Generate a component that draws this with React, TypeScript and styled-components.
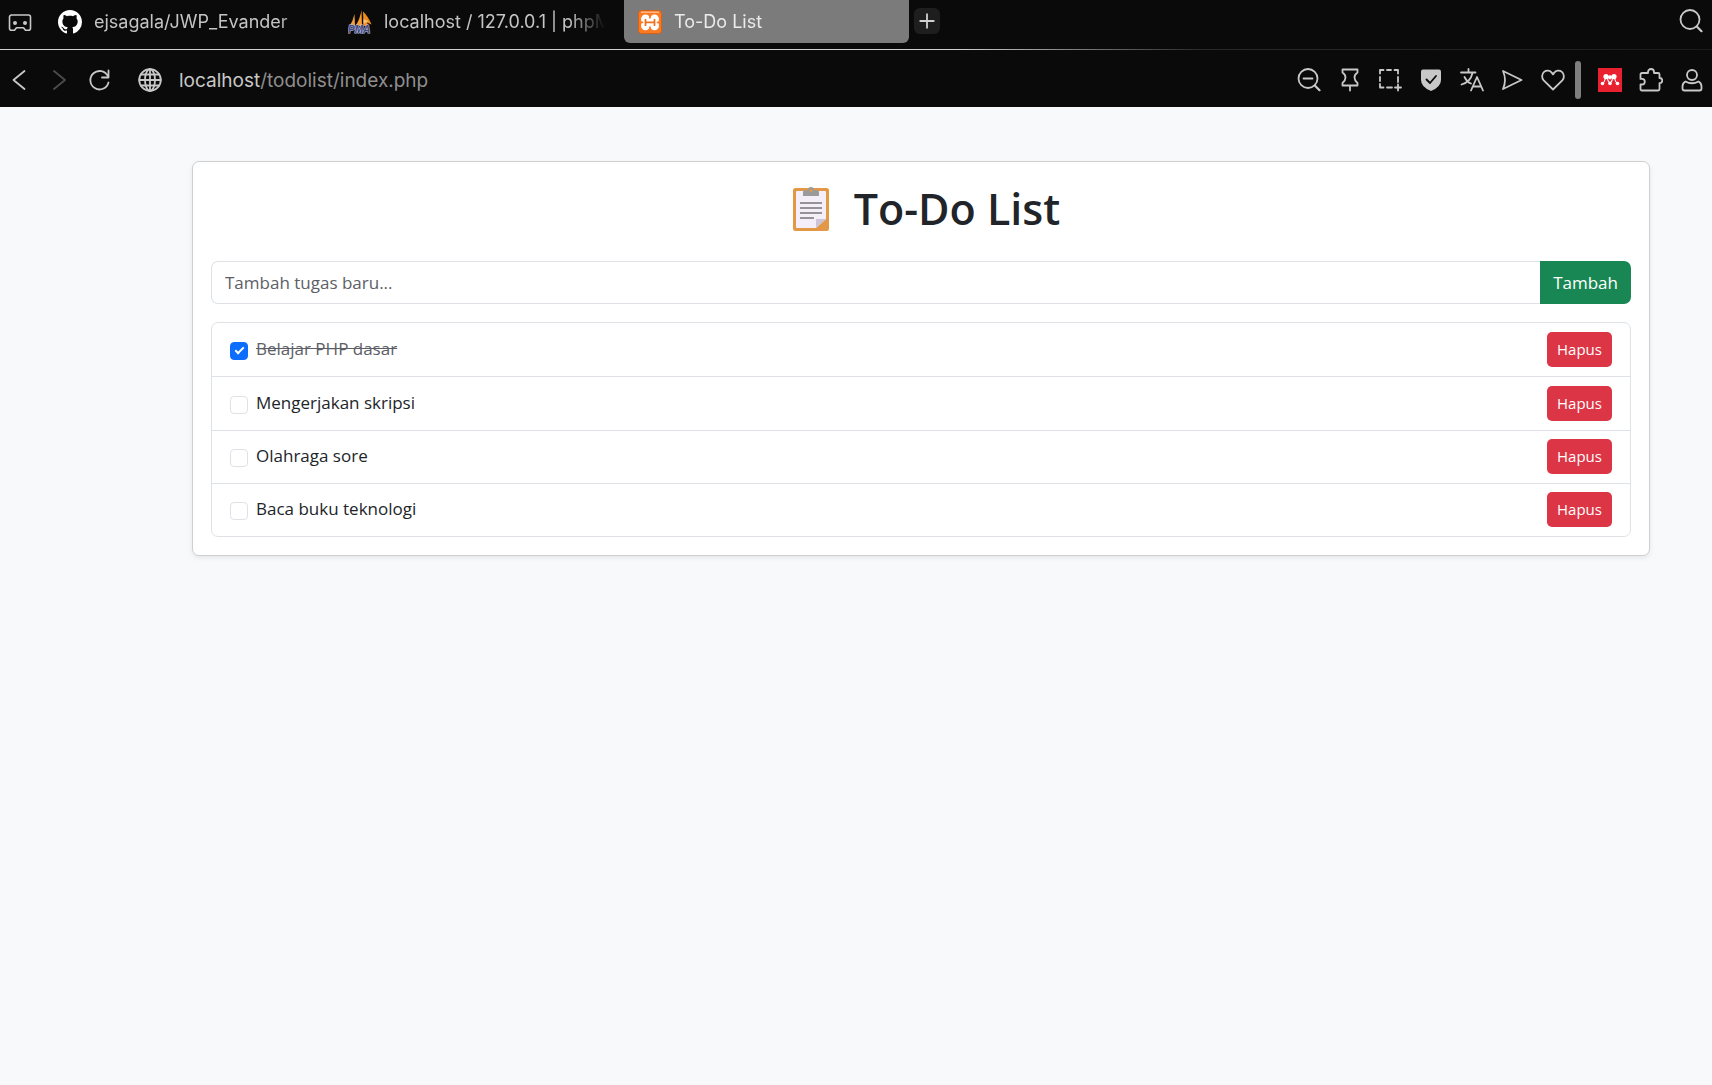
import React, { useState } from "react";
import styled, { createGlobalStyle } from "styled-components";

const GlobalStyle = createGlobalStyle`
  *, *::before, *::after { box-sizing: border-box; }
  html, body { margin: 0; min-height: 100vh; background: #f8f9fa; }
  body { font-family: "Open Sans", "Noto Sans", sans-serif; font-size: 17px; line-height: 27px; color: #212529; }
  button, input { font: inherit; margin: 0; }
`;

const Browser = styled.header`
  background: #0a0a0a;
  color: #c8c8c8;
  font-family: Inter, sans-serif;
`;

const TabStrip = styled.nav`
  display: flex;
  align-items: flex-start;
  height: 49px;
  padding: 0 9px 0 8px;
`;

const IconButton = styled.button<{ $dim?: boolean }>`
  display: flex;
  flex: none;
  padding: 0;
  border: 0;
  background: none;
  color: ${(p) => (p.$dim ? "#4c4c4c" : "#c8c8c8")};
  cursor: pointer;
`;

const StripButton = styled(IconButton)`
  padding-top: 9px;
`;

const Tabs = styled.div`
  display: flex;
  gap: 5px;
  margin-left: 12px;
`;

const Tab = styled.a<{ $active?: boolean }>`
  display: flex;
  align-items: center;
  gap: 12px;
  width: 285px;
  height: 43px;
  padding: 0 14px;
  border-radius: 0 0 6px 6px;
  background: ${(p) => (p.$active ? "#7b7b7b" : "transparent")};
  color: ${(p) => (p.$active ? "#ebebeb" : "#c4c4c4")};
  font-size: 18px;
  line-height: 43px;
  text-decoration: none;
`;

const TabTitle = styled.span`
  flex: 1;
  min-width: 0;
  overflow: hidden;
  white-space: nowrap;
  mask-image: linear-gradient(to right, #000 calc(100% - 36px), transparent);
`;

const NewTab = styled.button`
  display: flex;
  align-items: center;
  justify-content: center;
  width: 26px;
  height: 26px;
  margin: 8px auto 0 5px;
  padding: 0;
  border: 0;
  border-radius: 6px;
  background: #1e1e1e;
  color: #d0d0d0;
`;

const Divider = styled.div`
  height: 1px;
  background: linear-gradient(to right, #cfcfcf 0, #cfcfcf 56%, #2a2a2a 70%, #1c1c1c 100%);
`;

const AddressBar = styled.div`
  display: flex;
  align-items: center;
  height: 57px;
  padding: 3px 8px 0;
`;

const NavButtons = styled.div`
  display: flex;
  gap: 16px;
`;

const Address = styled.div`
  display: flex;
  flex: 1;
  align-items: center;
  gap: 17px;
  margin-left: 26px;
  font-size: 19px;
  line-height: 24px;
`;

const Url = styled.span`
  padding-top: 2px;
  color: #8f8f8f;
`;

const Host = styled.span`
  color: #c8c8c8;
`;

const PageActions = styled.div`
  display: flex;
  justify-content: space-between;
  width: 268px;
`;

const Grip = styled.span`
  width: 6px;
  height: 38px;
  margin: 0 17px 0 10px;
  border-radius: 3px;
  background: #7e7e7e;
`;

const Extensions = styled.div`
  display: flex;
  gap: 17px;
`;

const Main = styled.main`
  padding: 54px 62px 54px 192px;
`;

const Card = styled.section`
  padding: 18px;
  border: 1px solid #cfd0d2;
  border-radius: 7px;
  background: #fff;
  box-shadow: 0 2px 5px rgba(0, 0, 0, 0.08);
`;

const Title = styled.h1`
  display: flex;
  align-items: center;
  justify-content: center;
  gap: 12px;
  margin: 0 0 25px;
  padding-top: 2px;
  font-size: 43px;
  font-weight: 600;
  line-height: 54px;
`;

const TaskForm = styled.form`
  display: flex;
  margin-bottom: 18px;
`;

const TaskInput = styled.input`
  flex: 1;
  min-width: 0;
  height: 43px;
  padding: 0 13px;
  border: 1px solid #dee2e6;
  border-right: 0;
  border-radius: 7px 0 0 7px;
  background: #fff;
  color: #212529;
  &::placeholder { color: #5c6066; opacity: 1; }
`;

const AddButton = styled.button`
  padding: 0 13px;
  border: 0;
  border-radius: 0 7px 7px 0;
  background: #198754;
  color: #fff;
`;

const TaskList = styled.ul`
  display: grid;
  grid-auto-rows: 1fr;
  min-height: 215px;
  margin: 0;
  padding: 0;
  border: 1px solid #dee2e6;
  border-radius: 7px;
  list-style: none;
`;

const TaskRow = styled.li`
  display: flex;
  align-items: center;
  justify-content: space-between;
  padding: 0 18px;
  & + & { border-top: 1px solid #dee2e6; }
`;

const TaskLabel = styled.label<{ $done: boolean }>`
  display: flex;
  align-items: center;
  gap: 8px;
  color: ${(p) => (p.$done ? "#5c6066" : "#212529")};
  span {
    padding-bottom: 2px;
    text-decoration: ${(p) => (p.$done ? "line-through" : "none")};
  }
`;

const CheckBox = styled.input`
  appearance: none;
  display: grid;
  place-items: center;
  width: 18px;
  height: 18px;
  margin-top: 3px;
  border: 1px solid #dee2e6;
  border-radius: 4px;
  background: #fff;
  &:checked { border-color: #0d6efd; background: #0d6efd; }
  &:checked::after {
    content: "";
    width: 9px;
    height: 5px;
    margin-bottom: 3px;
    border: solid #fff;
    border-width: 0 0 2px 2px;
    transform: rotate(-45deg);
  }
`;

const DeleteButton = styled.button`
  width: 65px;
  height: 35px;
  padding: 0;
  border: 0;
  border-radius: 5px;
  background: #dc3545;
  color: #fff;
  font-size: 15px;
`;

type IconProps = { children: React.ReactNode; width?: number; size?: number };

const Icon = ({ children, width = 1.8, size = 24 }: IconProps) => (
  <svg width={size} height={size} viewBox="0 0 24 24" fill="none" stroke="currentColor"
    strokeWidth={width} strokeLinejoin="round" strokeLinecap="round" aria-hidden="true">
    {children}
  </svg>
);

const ControllerIcon = () => (
  <Icon width={1.6}>
    <path d="M3.500 6h17a2 2 0 0 1 2 2v11.300a2 2 0 0 1-2 2h-3l-2-2.600H8.500l-2 2.600h-3a2 2 0 0 1-2-2V8a2 2 0 0 1 2-2z" />
    <circle cx="7" cy="14" r="2" fill="currentColor" stroke="none" />
    <circle cx="17" cy="14" r="2" fill="currentColor" stroke="none" />
  </Icon>
);

const GithubIcon = () => (
  <svg width="24" height="24" viewBox="0 0 16 16" fill="#fff" aria-hidden="true">
    <path d="M8 0C3.58 0 0 3.58 0 8c0 3.54 2.29 6.53 5.47 7.59.4.07.55-.17.55-.38 0-.19-.01-.82-.01-1.49-2.01.37-2.53-.49-2.69-.94-.09-.23-.48-.94-.82-1.13-.28-.15-.68-.52-.01-.53.63-.01 1.08.58 1.23.82.72 1.21 1.87.87 2.33.66.07-.52.28-.87.51-1.07-1.78-.2-3.64-.89-3.64-3.95 0-.87.31-1.59.82-2.15-.08-.2-.36-1.02.08-2.12 0 0 .67-.21 2.2.82.64-.18 1.32-.27 2-.27s1.36.09 2 .27c1.53-1.04 2.2-.82 2.2-.82.44 1.1.16 1.92.08 2.12.51.56.82 1.27.82 2.15 0 3.07-1.87 3.75-3.65 3.95.29.25.54.73.54 1.48 0 1.07-.01 1.93-.01 2.2 0 .21.15.46.55.38A8.01 8.01 0 0 0 16 8c0-4.42-3.58-8-8-8z" />
  </svg>
);

const PhpMyAdminIcon = () => (
  <svg width="24" height="24" viewBox="0 0 24 24" aria-hidden="true">
    <path d="M6.500 4 7 16H1.500Q5 11 6.500 4z" fill="#f5a13a" />
    <path d="M13.500 0 14 16H7.500Q12 9 13.500 0z" fill="#f89c2e" />
    <path d="M15 1.500Q20 6 23.500 14.500L19 12.500 20.500 16H15.500z" fill="#ef8b1c" />
    <path d="M15.500 9l5 2-5 3z" fill="#fbc072" />
    <text x="0" y="23" fontFamily="Liberation Sans, sans-serif" fontSize="10"
      fontWeight="700" fontStyle="italic" fill="#43477f" stroke="#b9bbdc" strokeWidth="1.2" paintOrder="stroke">PMA</text>
  </svg>
);

const XamppIcon = () => (
  <svg width="24" height="24" viewBox="0 0 24 24" aria-hidden="true">
    <rect x="0.500" y="0.500" width="23" height="23" rx="3" fill="#fb7a24" stroke="#d8601a" />
    <path d="M3 2.200h18" stroke="#ffc79c" strokeWidth="1.200" />
    <path d="M7 8.600v7.200M17 8.600v7.200M7 12.200h10" stroke="#fff" strokeWidth="7" fill="none" />
    <g fill="#fff">
      <circle cx="7.500" cy="8.900" r="4.400" />
      <circle cx="16.500" cy="8.900" r="4.400" />
      <circle cx="7.500" cy="15.900" r="4.400" />
      <circle cx="16.500" cy="15.900" r="4.400" />
    </g>
    <path d="M2.500 12.400h2M19.500 12.400h2M12 4.500v3M12 17.300v3" stroke="#fb7a24" strokeWidth="1.800" strokeLinecap="round" />
    <path d="M7.500 9.600v5.600M16.500 9.600v5.600M7.500 12.400h9" stroke="#f0701f" strokeWidth="1.800"
      strokeLinecap="round" strokeLinejoin="round" fill="none" />
  </svg>
);

const SearchIcon = ({ minus = false }: { minus?: boolean }) => (
  <Icon>
    <circle cx="11" cy="10.500" r="9.500" />
    <path d="M17.800 17.500l4.700 4.700" strokeWidth="2.200" />
    {minus && <path d="M6.500 10.500h9" />}
  </Icon>
);

const MendeleyIcon = () => (
  <svg width="24" height="24" viewBox="0 0 24 24" aria-hidden="true">
    <rect width="24" height="24" fill="#e9202f" />
    <g fill="#fff">
      <path d="M4.500 15.500Q7 14 7.500 9M12 15.500Q9.500 13 9 9M12 15.500Q14.500 13 15 9M19.500 15.500Q17 14 16.500 9"
        fill="none" stroke="#fff" strokeWidth="1.100" />
      <circle cx="8" cy="8.600" r="2.600" />
      <circle cx="16" cy="8.600" r="2.600" />
      <circle cx="12" cy="9.300" r="2.100" />
      <circle cx="4.500" cy="15.500" r="1.800" />
      <circle cx="12" cy="15.500" r="1.800" />
      <circle cx="19.500" cy="15.500" r="1.800" />
    </g>
  </svg>
);

const ClipboardIcon = () => (
  <svg width="60" height="46" viewBox="0 0 60 46" aria-hidden="true">
    <rect x="11" y="2" width="36" height="43" rx="2.500" fill="#e39848" />
    <path d="M15 5h28a1 1 0 0 1 1 1v27L34 42H15a1 1 0 0 1-1-1V6a1 1 0 0 1 1-1z" fill="#f3eef8" />
    <path d="M34 42v-9h10z" fill="#cdc4d8" />
    <path d="M21 10V6q0-2 3-2h2q0-3 3-3t3 3h2q3 0 3 2v4z" fill="#9a9a9a" />
    <circle cx="29" cy="4.500" r="1.500" fill="#e39848" />
    <path d="M18 17h22M18 22h22M18 27h22M18 32h14" stroke="#969298" strokeWidth="1.800" />
  </svg>
);

const initialTasks = [
  { id: 1, text: "Belajar PHP dasar", done: true },
  { id: 2, text: "Mengerjakan skripsi", done: false },
  { id: 3, text: "Olahraga sore", done: false },
  { id: 4, text: "Baca buku teknologi", done: false },
];

const pageActions = [
  { label: "Zoom out", icon: <SearchIcon minus /> },
  { label: "Pin", icon: <Icon><path d="M4.500 1.500h15v3q-3 2-3 5t3 5.500v2.500h-15V15q3-2.500 3-5.500t-3-5zM12 17.500v5" /></Icon> },
  { label: "Snapshot", icon: (
    <Icon>
      <path d="M2 5.500V2h3.500M9 2h4M16.500 2H20v3.500M20 9v5M2 9v4M2 16v3.500h3.500M9 19.500h5" />
      <path d="M20 16.500v6M17 19.500h6" />
    </Icon>
  ) },
  { label: "Shield", icon: (
    <Icon>
      <path d="M4 1.500h16q2 0 2 2V12q0 7-10 11Q2 19 2 12V3.500q0-2 2-2z" fill="currentColor" stroke="none" />
      <path d="M7.500 11.500l3.500 3.500 6-7" stroke="#0a0a0a" />
    </Icon>
  ) },
  { label: "Translate", icon: (
    <Icon>
      <path d="M1 4.500h14.500M8.500 1v3.500M12.500 5Q10.500 14 1.500 16.500M4.500 9q2.500 5 6.500 6.500" />
      <path d="M11 22.500 17 9l6 13.500M13 18.500h8" />
    </Icon>
  ) },
  { label: "Send", icon: <Icon><path d="M3 3l18.500 9L3 21q4-9 0-18z" /></Icon> },
  { label: "Favourite", icon: <Icon><path d="M12 21.500 2.700 12.300C.4 9.900.7 5.900 3.100 3.900c2.500-2.100 6-1.500 7.800 1L12 6.400l1.100-1.500c1.800-2.500 5.300-3.100 7.800-1 2.400 2 2.700 6 .4 8.400z" /></Icon> },
];

export default function App() {
  const [tasks, setTasks] = useState(initialTasks);
  const [draft, setDraft] = useState("");

  const addTask = (event: React.FormEvent) => {
    event.preventDefault();
    if (!draft.trim()) return;
    setTasks([...tasks, { id: Date.now(), text: draft.trim(), done: false }]);
    setDraft("");
  };

  const toggle = (id: number) =>
    setTasks(tasks.map((t) => (t.id === id ? { ...t, done: !t.done } : t)));

  return (
    <>
      <GlobalStyle />
      <Browser>
        <TabStrip>
          <StripButton aria-label="Workspace"><ControllerIcon /></StripButton>
          <Tabs>
            <Tab href="#github"><GithubIcon /><TabTitle>ejsagala/JWP_Evander</TabTitle></Tab>
            <Tab href="#phpmyadmin"><PhpMyAdminIcon /><TabTitle>localhost / 127.0.0.1 | phpM</TabTitle></Tab>
            <Tab href="#todo" $active><XamppIcon /><TabTitle>To-Do List</TabTitle></Tab>
          </Tabs>
          <NewTab aria-label="New tab"><Icon size={18}><path d="M12 3v18M3 12h18" strokeWidth="2.400" /></Icon></NewTab>
          <StripButton aria-label="Search tabs"><SearchIcon /></StripButton>
        </TabStrip>
        <Divider />
        <AddressBar>
          <NavButtons>
            <IconButton aria-label="Back"><Icon><path d="M16.500 3 5.500 12l11 9" /></Icon></IconButton>
            <IconButton aria-label="Forward" $dim><Icon><path d="M6 3l11 9-11 9" /></Icon></IconButton>
            <IconButton aria-label="Reload"><Icon><path d="M20.500 14.500A9.200 9.200 0 1 1 20 8.500M20.500 2.500v7H14" /></Icon></IconButton>
          </NavButtons>
          <Address>
            <Icon>
              <circle cx="12" cy="12" r="10.800" />
              <ellipse cx="12" cy="12" rx="5" ry="10.800" />
              <path d="M12 1.200v21.600M1.200 12h21.600M3 6.500h18M3 17.500h18" />
            </Icon>
            <Url><Host>localhost</Host>/todolist/index.php</Url>
          </Address>
          <PageActions>
            {pageActions.map((a) => <IconButton key={a.label} aria-label={a.label}>{a.icon}</IconButton>)}
          </PageActions>
          <Grip />
          <Extensions>
            <IconButton aria-label="Mendeley"><MendeleyIcon /></IconButton>
            <IconButton aria-label="Extensions">
              <Icon>
                <path d="M4.500 5H9V4a3 3 0 0 1 6 0v1h4q1.500 0 1.500 1.500V10h.2a2.600 2.600 0 0 1 0 5.200h-.2V21q0 1.500-1.500 1.500H3Q1.500 22.500 1.500 21v-4.500H3a2.800 2.800 0 0 0 0-5.600H1.500V6.500Q1.500 5 3 5z" />
              </Icon>
            </IconButton>
            <IconButton aria-label="Profile">
              <Icon>
                <circle cx="12" cy="7" r="5" />
                <path d="M5.500 13.500q6.500 3.500 13 0 3 1.500 3 5v2q0 2-2 2h-15q-2 0-2-2v-2q0-3.500 3-5z" />
              </Icon>
            </IconButton>
          </Extensions>
        </AddressBar>
      </Browser>
      <Main>
        <Card>
          <Title><ClipboardIcon />To-Do List</Title>
          <TaskForm onSubmit={addTask}>
            <TaskInput aria-label="Tugas baru" placeholder="Tambah tugas baru..." value={draft}
              onChange={(e) => setDraft(e.target.value)} />
            <AddButton type="submit">Tambah</AddButton>
          </TaskForm>
          <TaskList>
            {tasks.map((t) => (
              <TaskRow key={t.id}>
                <TaskLabel $done={t.done}>
                  <CheckBox type="checkbox" checked={t.done} onChange={() => toggle(t.id)} />
                  <span>{t.text}</span>
                </TaskLabel>
                <DeleteButton type="button" onClick={() => setTasks(tasks.filter((x) => x.id !== t.id))}>Hapus</DeleteButton>
              </TaskRow>
            ))}
          </TaskList>
        </Card>
      </Main>
    </>
  );
}
